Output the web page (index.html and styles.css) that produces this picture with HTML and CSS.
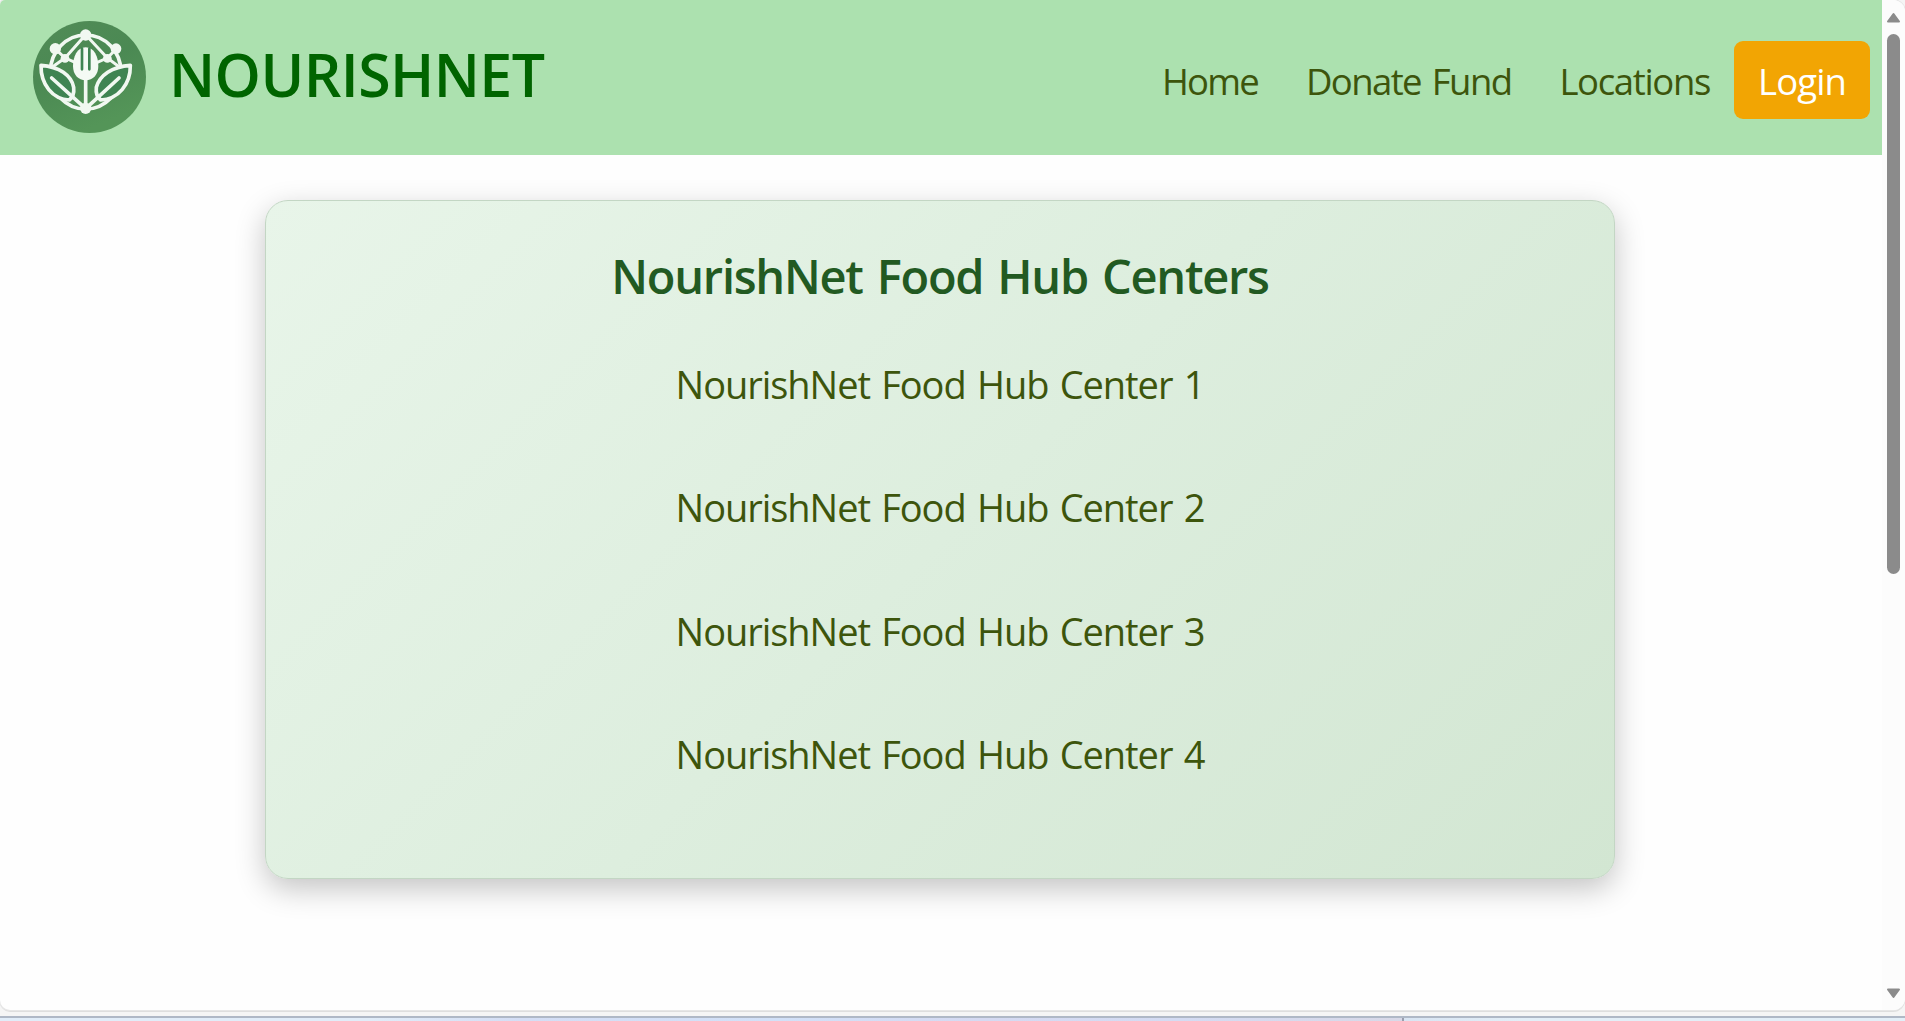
FILE: index.html
```html
<!DOCTYPE html>
<html lang="en">
<head>
<meta charset="utf-8">
<title>NourishNet</title>
<link rel="stylesheet" href="styles.css">
</head>
<body>
<div class="window">
  <div class="page">
    <header class="header">
      <div class="brand">
        <svg class="logo" viewBox="9 9 339 336" preserveAspectRatio="none" aria-hidden="true">
          <defs>
            <linearGradient id="disc" x1="0" y1="0" x2="0.4" y2="1">
              <stop offset="0" stop-color="#518b57"/>
              <stop offset="0.5" stop-color="#4b8953"/>
              <stop offset="1" stop-color="#549558"/>
            </linearGradient>
          </defs>
          <ellipse cx="178.500" cy="177" rx="169.500" ry="168" fill="url(#disc)"/>
          <g fill="none" stroke="#f1f8f1" stroke-width="11" stroke-linecap="round" stroke-linejoin="round">
            <ellipse cx="167" cy="162" rx="106" ry="111"/>
            <path d="M167 50 105 120 75 92M105 120 66 148M105 120l32 14M167 50l65 70 27-28M232 120l38 28M232 120l-32 14" stroke-width="9"/>
            <path d="M33 142C88 146 124 172 131 208c2 18-3 30-13 38C68 244 32 200 33 142Z" fill="#3f8452"/>
            <path d="M301 142c-55 4-92 30-102 66-2 18 3 30 13 38C264 244 302 200 301 142Z" fill="#3f8452"/>
            <path d="M65 180 167 272 267 180M167 180v92"/>
          </g>
          <path d="M167 88c-26 0-38 30-38 56 0 26 16 43 38 43s38-17 38-43c0-26-12-56-38-56Z" fill="#f4faf4"/>
          <path d="M156 92v62M178 92v62" stroke="#3f8452" stroke-width="8" stroke-linecap="round"/>
          <g fill="#f1f8f1">
            <circle cx="167" cy="51" r="17"/>
            <circle cx="76" cy="92" r="17"/>
            <circle cx="258" cy="92" r="16"/>
            <circle cx="105" cy="121" r="13"/>
            <circle cx="232" cy="121" r="13"/>
            <circle cx="167" cy="271" r="17"/>
          </g>
        </svg>
        <span class="brand-name">NOURISHNET</span>
      </div>
      <nav class="nav">
        <a class="link link-home">Home</a>
        <a class="link link-donate">Donate Fund</a>
        <a class="link">Locations</a>
        <a class="link link-login">Login</a>
      </nav>
    </header>
    <main class="main">
      <section class="card">
        <h1 class="card-title">NourishNet Food Hub Centers</h1>
        <ul class="centers">
          <li>NourishNet Food Hub Center 1</li>
          <li>NourishNet Food Hub Center 2</li>
          <li>NourishNet Food Hub Center 3</li>
          <li>NourishNet Food Hub Center 4</li>
        </ul>
      </section>
    </main>
  </div>
  <div class="scrollbar">
    <svg class="arrow" viewBox="0 0 15 11"><path d="M7.500 2 13 9.500H2Z"/></svg>
    <div class="thumb"></div>
    <svg class="arrow arrow-down" viewBox="0 0 15 11"><path d="M7.500 9 13 1.500H2Z"/></svg>
  </div>
</div>
<div class="taskbar"><span class="taskbar-left"></span><span class="taskbar-right"></span></div>
</body>
</html>
```
FILE: styles.css
```css
* { box-sizing: border-box; }

body {
  margin: 0;
  height: 1021px;
  overflow: hidden;
  display: flex;
  flex-direction: column;
  background: #f5f5f5;
  font-family: "Open Sans", "Noto Sans", sans-serif;
}

.window {
  height: 1010px;
  display: flex;
  flex: none;
  overflow: hidden;
  border-radius: 5px 12px 12px 10px;
  background: #fefefe;
  box-shadow: 0 0 0 1px #e6e6e6, 0 2px 0 #dedede;
}

.page { flex: 1; }

.header {
  height: 155px;
  padding: 0 12px 0 33px;
  display: flex;
  align-items: center;
  justify-content: space-between;
  background: #ace1af;
}

.brand {
  display: flex;
  align-items: center;
  gap: 23px;
}

.logo {
  width: 113px;
  height: 112px;
  margin-bottom: 2px;
  display: block;
}

.brand-name {
  padding-bottom: 8px;
  font-size: 59px;
  font-weight: 600;
  line-height: 72px;
  letter-spacing: -0.600px;
  color: #006400;
}

.nav {
  display: flex;
  padding-top: 5px;
}

.link {
  padding: 13px 24px 11px;
  font-size: 36.500px;
  line-height: 54px;
  letter-spacing: -1.350px;
  color: #3d550c;
  white-space: nowrap;
}

.link-home { letter-spacing: -1.800px; }

.link-donate {
  letter-spacing: -1.600px;
  word-spacing: 3px;
}

.link-login {
  width: 136px;
  padding-right: 0;
  border-radius: 9px;
  background: #f2a503;
  color: #fff;
  letter-spacing: -0.900px;
}

.main {
  padding: 45px 2px 0 0;
  display: flex;
  justify-content: center;
}

.card {
  width: 1350px;
  height: 679px;
  padding-top: 47px;
  border: 1px solid #c3d6c4;
  border-radius: 23px;
  background: linear-gradient(135deg, #e8f5e9, #ddeede 50%, #d2e6d2);
  box-shadow: 0 10px 30px rgba(0, 0, 0, 0.23);
  text-align: center;
}

.card-title {
  margin: 0 0 52px;
  font-size: 47px;
  font-weight: 600;
  line-height: 56px;
  letter-spacing: -1.250px;
  word-spacing: 3px;
  color: #225a22;
}

.centers {
  margin: 0;
  padding: 0;
  list-style: none;
  display: flex;
  flex-direction: column;
  gap: 66.330px;
  font-size: 38px;
  line-height: 57px;
  letter-spacing: -1.050px;
  word-spacing: 2.500px;
  color: #3d550c;
}

.scrollbar {
  width: 23px;
  padding: 12px 0 11px;
  display: flex;
  flex-direction: column;
  align-items: center;
  background: #fcfcfc;
}

.arrow {
  width: 15px;
  height: 11px;
  fill: #8b8b8b;
  stroke: #8b8b8b;
  stroke-width: 2;
  stroke-linejoin: round;
}

.arrow-down { margin-top: auto; }

.thumb {
  width: 13px;
  height: 540px;
  margin-top: 11px;
  border-radius: 7px;
  background: #8b8b8b;
}

.taskbar {
  height: 5px;
  margin-top: 6px;
  display: flex;
  border-top: 2px solid #afb8c6;
  background: #e1edf7;
}

.taskbar-left {
  width: 1404px;
  border-right: 2px solid #9a9fae;
  background: linear-gradient(90deg, #e1edf9 0 370px, #d4def5 520px, #d2e1f8 780px, #d5daf2 980px, #d4dcf3 1180px, #d8d9e8);
}

.taskbar-right {
  flex: 1;
  background: linear-gradient(90deg, #d9e5f3, #e3eff8 120px);
}
```
